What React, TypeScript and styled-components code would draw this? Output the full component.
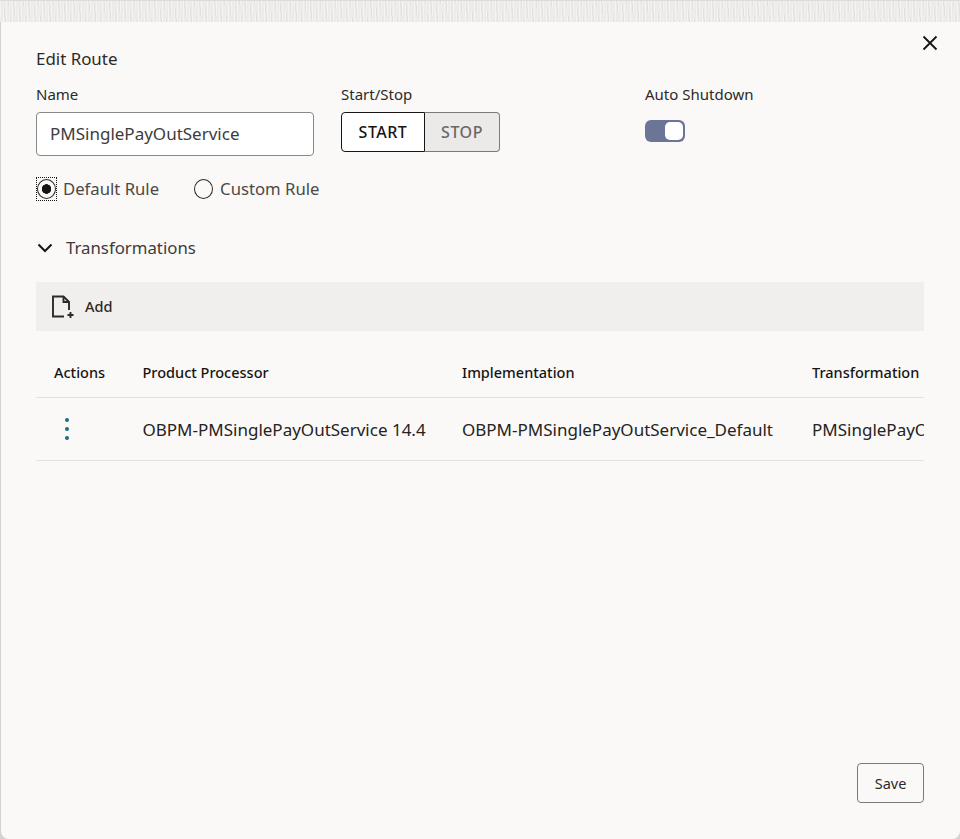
import { JSX } from "react";
import styled, { createGlobalStyle } from "styled-components";

const GlobalStyle = createGlobalStyle`
  html, body {
    margin: 0;
    padding: 0;
    background: #d4d3d1;
  }

  * {
    box-sizing: border-box;
  }
`;

const Page = styled.div`
  width: 960px;
  height: 839px;
  display: flex;
  flex-direction: column;
  font-family: "Noto Sans", sans-serif;
  color: #161513;
  overflow: hidden;
`;

const Backdrop = styled.div`
  height: 22px;
  flex: none;
  border-top: 1px solid #dddcda;
  background-color: #ecebe9;
  background-image:
    repeating-linear-gradient(90deg, rgba(255, 255, 255, 0.4) 0 1px, transparent 1px 3px),
    repeating-linear-gradient(84deg, rgba(190, 188, 185, 0.22) 0 1px, transparent 1px 5px);
`;

const Dialog = styled.div`
  flex: 1;
  position: relative;
  margin-left: 1px;
  background: #fbf9f8;
  border-radius: 0 0 8px 8px;
  padding: 25px 36px 0 35px;
  display: flex;
  flex-direction: column;
`;

const CloseButton = styled.button`
  position: absolute;
  top: 9px;
  right: 18px;
  width: 24px;
  height: 24px;
  padding: 0;
  border: 0;
  background: none;
  color: #161513;
  display: flex;
  align-items: center;
  justify-content: center;
`;

const Title = styled.h1`
  margin: 0;
  font-size: 16.9px;
  font-weight: 400;
  line-height: 24px;
  color: #2b2a28;
`;

const FormRow = styled.div`
  display: grid;
  grid-template-columns: 305px 304px auto;
  margin-top: 13px;
`;

const Field = styled.div`
  display: flex;
  flex-direction: column;
`;

const Label = styled.label`
  font-size: 15px;
  line-height: 20px;
  color: #2b2a28;
  height: 28px;
`;

const TextInput = styled.div`
  width: 278px;
  height: 44px;
  padding: 0 0 2px 13px;
  display: flex;
  align-items: center;
  background: #fff;
  border: 1px solid #8b8986;
  border-radius: 4px;
  font-size: 17px;
  color: #3d3c3a;
`;

const Segments = styled.div`
  display: flex;
  width: 159px;
  height: 40px;
`;

const Segment = styled.div<{ $on?: boolean }>`
  display: flex;
  align-items: center;
  justify-content: center;
  font-size: 16px;
  font-weight: 500;
  letter-spacing: 0.5px;
  width: ${({ $on }) => ($on ? "84px" : "75px")};
  background: ${({ $on }) => ($on ? "#fff" : "#eceae8")};
  color: ${({ $on }) => ($on ? "#161513" : "#6a6866")};
  border: 1px solid ${({ $on }) => ($on ? "#161513" : "#7c7a78")};
  border-left-width: ${({ $on }) => ($on ? "1px" : "0")};
  border-radius: ${({ $on }) => ($on ? "4px 0 0 4px" : "0 4px 4px 0")};
`;

const Toggle = styled.div`
  width: 40px;
  height: 22px;
  margin-top: 8px;
  padding: 2px;
  display: flex;
  justify-content: flex-end;
  background: #6b7596;
  border-radius: 6px;
`;

const Knob = styled.span`
  width: 18px;
  height: 18px;
  background: #fff;
  border-radius: 5px;
`;

const RadioRow = styled.div`
  display: flex;
  gap: 35px;
  margin-top: 21px;
  padding-left: 1px;
  height: 40px;
  align-items: flex-start;
`;

const RadioOption = styled.div`
  display: flex;
  align-items: center;
  gap: 7px;
  font-size: 16.7px;
  line-height: 24px;
  color: #4a4947;
`;

const RadioMark = styled.span<{ $on?: boolean; $focus?: boolean }>`
  width: 19px;
  height: 22px;
  display: flex;
  align-items: center;
  justify-content: center;
  outline: ${({ $focus }) => ($focus ? "1px dotted #161513" : "none")};
  outline-offset: 0;

  &::before {
    content: "";
    width: 18px;
    height: 18px;
    border-radius: 50%;
    border: 1.5px solid #2b2a28;
    background: ${({ $on }) =>
      $on ? "radial-gradient(circle, #161513 0 4.5px, transparent 5px)" : "transparent"};
  }
`;

const SectionHeader = styled.div`
  display: flex;
  align-items: center;
  gap: 12px;
  margin-top: 16px;
  height: 29px;
  font-size: 16.8px;
  color: #3d3c3a;
`;

const Toolbar = styled.div`
  margin-top: 20px;
  width: 888px;
  height: 49px;
  padding-left: 15px;
  display: flex;
  align-items: center;
  gap: 10px;
  background: #f1efed;
  font-size: 14.5px;
  font-weight: 500;
  color: #2b2a28;
`;

const ToolbarLabel = styled.span`
  margin-bottom: 2px;
`;

const TableClip = styled.div`
  width: 888px;
  overflow: hidden;
  margin-top: 17px;
`;

const Row = styled.div<{ $head?: boolean }>`
  display: grid;
  grid-template-columns: 106.5px 319.5px 350px 300px;
  width: 1076px;
  height: ${({ $head }) => ($head ? "50px" : "63px")};
  padding-bottom: ${({ $head }) => ($head ? "2px" : "0")};
  align-items: center;
  border-bottom: 1px solid #e3e1df;
  font-size: ${({ $head }) => ($head ? "14.5px" : "17px")};
  font-weight: ${({ $head }) => ($head ? 500 : 400)};
  color: ${({ $head }) => ($head ? "#161513" : "#242321")};
`;

const Cell = styled.div<{ $first?: boolean }>`
  padding-left: ${({ $first }) => ($first ? "18px" : "0")};
  white-space: nowrap;
`;

const Dots = styled.div`
  width: 26px;
  display: flex;
  flex-direction: column;
  align-items: center;
  gap: 5px;
  margin-left: 18px;
`;

const Dot = styled.span`
  width: 4px;
  height: 4px;
  border-radius: 50%;
  background: #1d6b84;
`;

const Footer = styled.div`
  margin-top: auto;
  margin-bottom: 36px;
  width: 888px;
  display: flex;
  justify-content: flex-end;
`;

const SaveButton = styled.button`
  width: 67px;
  height: 40px;
  background: transparent;
  border: 1px solid #7c7a78;
  border-radius: 4px;
  font-family: inherit;
  font-size: 14.5px;
  font-weight: 400;
  color: #2b2a28;
`;

function App(): JSX.Element {
  return (
    <Page>
      <GlobalStyle />
      <Backdrop />
      <Dialog>
        <CloseButton aria-label="Close">
          <svg width="24" height="24" viewBox="0 0 24 24" fill="none" stroke="currentColor" strokeWidth="1.8">
            <path d="M5.5 5.5 18.5 18.5M18.5 5.5 5.5 18.5" />
          </svg>
        </CloseButton>

        <Title>Edit Route</Title>

        <FormRow>
          <Field>
            <Label>Name</Label>
            <TextInput>PMSinglePayOutService</TextInput>
          </Field>
          <Field>
            <Label>Start/Stop</Label>
            <Segments>
              <Segment $on>START</Segment>
              <Segment>STOP</Segment>
            </Segments>
          </Field>
          <Field>
            <Label>Auto Shutdown</Label>
            <Toggle>
              <Knob />
            </Toggle>
          </Field>
        </FormRow>

        <RadioRow>
          <RadioOption>
            <RadioMark $on $focus />
            Default Rule
          </RadioOption>
          <RadioOption>
            <RadioMark />
            Custom Rule
          </RadioOption>
        </RadioRow>

        <SectionHeader>
          <svg width="18" height="18" viewBox="0 0 18 18" fill="none" stroke="#161513" strokeWidth="2">
            <path d="M2.5 5.5 9 12l6.5-6.5" />
          </svg>
          Transformations
        </SectionHeader>

        <Toolbar>
          <svg width="24" height="24" viewBox="0 0 24 24" fill="none" stroke="#2b2a28" strokeWidth="1.9">
            <path d="M13 21.5H2V1.5h10.5L18 7v8" />
            <path d="M12.5 1.5V7H18" />
            <path d="M19.5 17v6M16.5 20h6" />
          </svg>
          <ToolbarLabel>Add</ToolbarLabel>
        </Toolbar>

        <TableClip>
          <Row $head>
            <Cell $first>Actions</Cell>
            <Cell>Product Processor</Cell>
            <Cell>Implementation</Cell>
            <Cell>Transformation</Cell>
          </Row>
          <Row>
            <Dots>
              <Dot />
              <Dot />
              <Dot />
            </Dots>
            <Cell>OBPM-PMSinglePayOutService 14.4</Cell>
            <Cell>OBPM-PMSinglePayOutService_Default</Cell>
            <Cell>PMSinglePayOutService</Cell>
          </Row>
        </TableClip>

        <Footer>
          <SaveButton>Save</SaveButton>
        </Footer>
      </Dialog>
    </Page>
  );
}

export default App;
